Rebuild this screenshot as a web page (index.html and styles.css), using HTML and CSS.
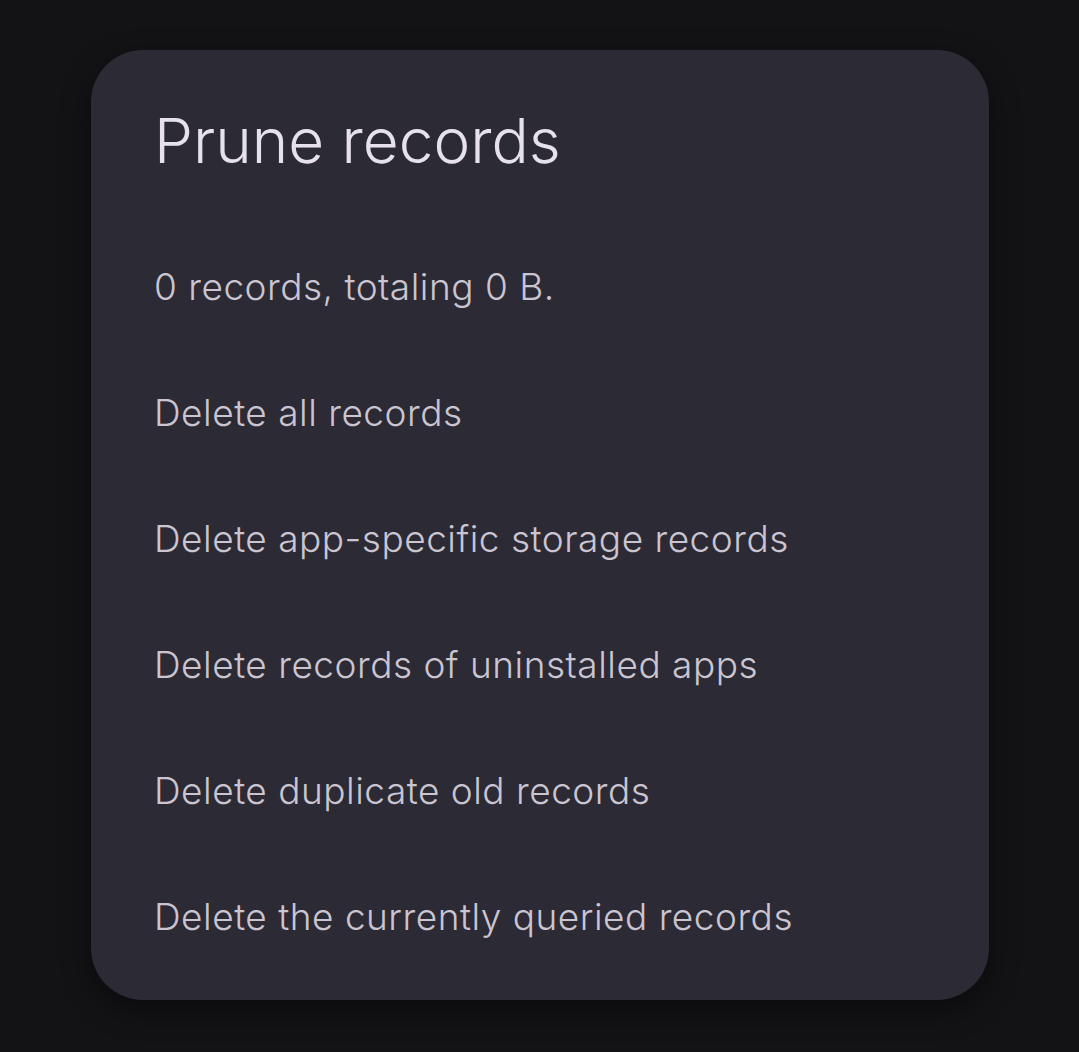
FILE: index.html
```html
<!DOCTYPE html>
<html lang="en">
<head>
<meta charset="utf-8">
<title>Prune records</title>
<link rel="stylesheet" href="styles.css">
</head>
<body>
<div class="dialog">
  <h1 class="title">Prune records</h1>
  <ul class="list">
    <li class="row info">0 records, totaling 0 B.</li>
    <li class="row">Delete all records</li>
    <li class="row">Delete app-specific storage records</li>
    <li class="row">Delete records of uninstalled apps</li>
    <li class="row">Delete duplicate old records</li>
    <li class="row">Delete the currently queried records</li>
  </ul>
</div>
</body>
</html>
```

FILE: styles.css
```css
html, body {
  margin: 0;
  padding: 0;
  background: #131316;
  height: 100%;
}
body {
  font-family: "Inter", "Noto Sans", sans-serif;
  padding: 50px 90px 0 91px;
  box-sizing: border-box;
}
.dialog {
  width: 898px;
  height: 950px;
  box-sizing: border-box;
  background: #2c2a34;
  border-radius: 52px;
  box-shadow: 0 10px 30px rgba(0, 0, 0, 0.45);
  padding: 49px 40px 20px 63px;
}
.title {
  margin: 0;
  font-weight: 300;
  font-size: 62px;
  line-height: 84px;
  color: #e6e1ec;
}
.list {
  list-style: none;
  margin: 0;
  padding: 0;
  margin-top: 41px;
}
.row {
  height: 126px;
  line-height: 126px;
  font-size: 37px;
  font-weight: 300;
  letter-spacing: 0.5px;
  color: #cac5d1;
  white-space: nowrap;
}
```
